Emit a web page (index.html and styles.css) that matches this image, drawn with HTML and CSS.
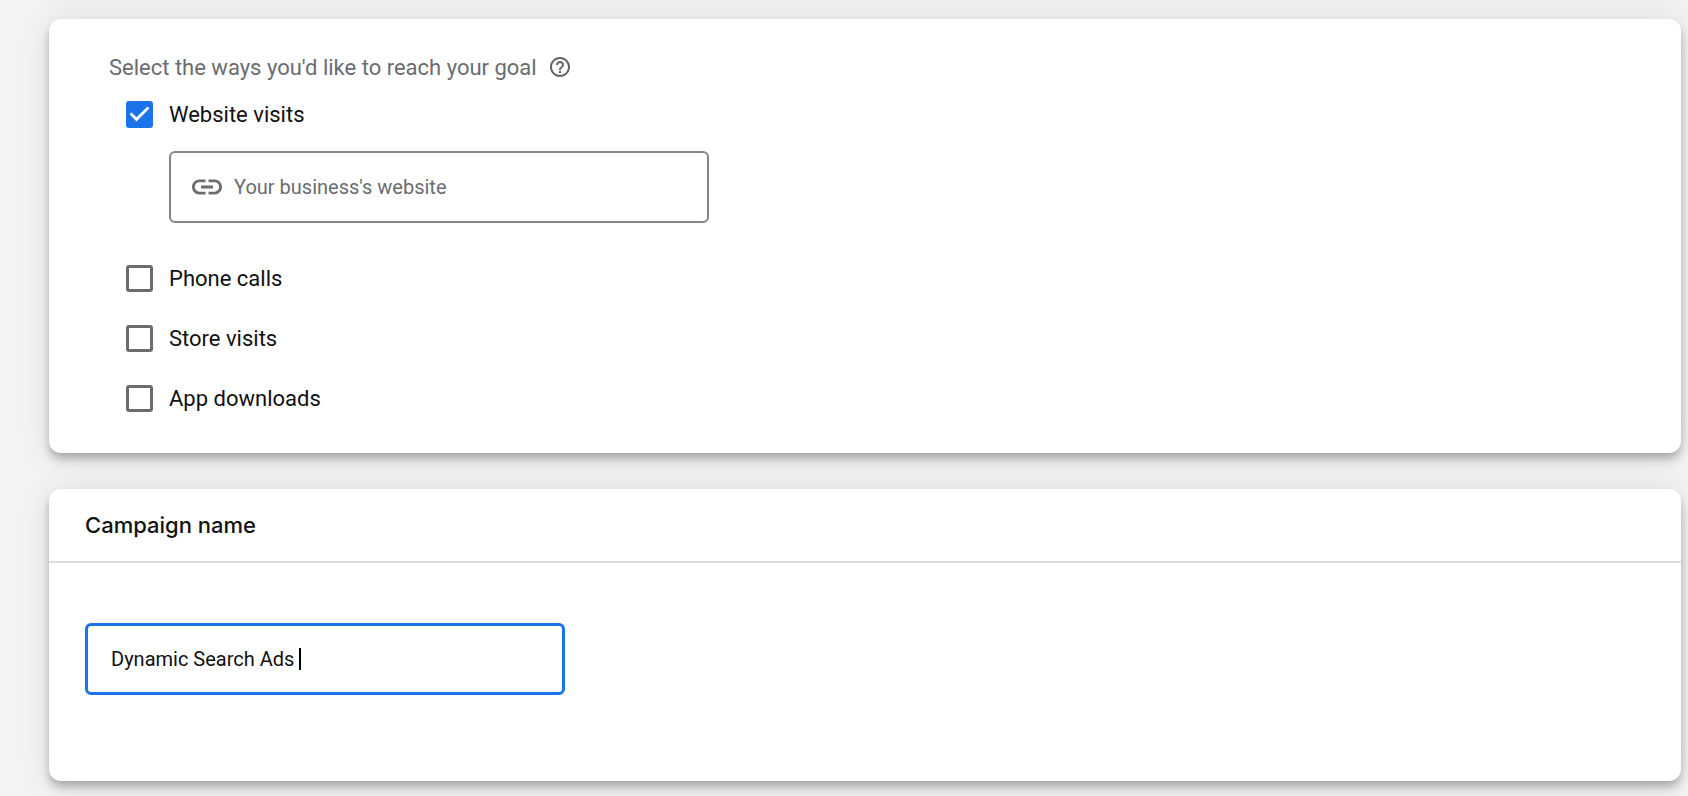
FILE: index.html
```
<!DOCTYPE html>
<html lang="en">
<head>
    <meta charset="UTF-8">
    <meta name="viewport" content="width=device-width, initial-scale=1.0">
    <title>New campaign</title>
    <link rel="stylesheet" href="styles.css">
</head>
<body>
    <main class="page">
        <section class="card previous-card"></section>

        <section class="card goal-card">
            <fieldset class="goals">
                <legend class="goals-title">
                    Select the ways you'd like to reach your goal
                    <button class="help" type="button" aria-label="Help">
                        <svg viewBox="0 0 24 24" width="24" height="24" fill="currentColor">
                            <path d="M11 18h2v-2h-2v2zm1-16C6.48 2 2 6.48 2 12s4.48 10 10 10 10-4.48 10-10S17.52 2 12 2zm0 18c-4.41 0-8-3.59-8-8s3.59-8 8-8 8 3.59 8 8-3.59 8-8 8zm0-14c-2.21 0-4 1.79-4 4h2c0-1.1.9-2 2-2s2 .9 2 2c0 2-3 1.75-3 5h2c0-2.25 3-2.5 3-5 0-2.21-1.79-4-4-4z"/>
                        </svg>
                    </button>
                </legend>
                <label class="option"><input type="checkbox" checked> Website visits</label>
                <div class="website-field">
                    <svg viewBox="0 0 24 24" width="36" height="36" fill="currentColor">
                        <path d="M3.9 12c0-1.71 1.39-3.1 3.1-3.1h4V7H7c-2.76 0-5 2.24-5 5s2.24 5 5 5h4v-1.9H7c-1.71 0-3.1-1.39-3.1-3.1zM8 13h8v-2H8v2zm9-6h-4v1.9h4c1.71 0 3.1 1.39 3.1 3.1s-1.39 3.1-3.1 3.1h-4V17h4c2.76 0 5-2.24 5-5s-2.24-5-5-5z"/>
                    </svg>
                    <input type="text" placeholder="Your business's website" aria-label="Your business's website">
                </div>
                <label class="option"><input type="checkbox"> Phone calls</label>
                <label class="option"><input type="checkbox"> Store visits</label>
                <label class="option"><input type="checkbox"> App downloads</label>
            </fieldset>
        </section>

        <section class="card name-card">
            <h2><label for="campaign-name">Campaign name</label></h2>
            <div class="name-body">
                <div class="name-field">
                    <input id="campaign-name" type="text" value="Dynamic Search Ads ">
                    <span class="caret"></span>
                </div>
            </div>
        </section>
    </main>
</body>
</html>
```
FILE: styles.css
```
* {
    box-sizing: border-box;
}
body {
    margin: 0;
    background-color: #f1f3f4;
    color: #111;
    font-family: Roboto, Arial, sans-serif;
    font-size: 22px;
    overflow: hidden;
}
input, button {
    font-family: inherit;
    margin: 0;
}
.page {
    display: flex;
    flex-direction: column;
    gap: 36px;
    padding: 0 7px 15px 49px;
}
.card {
    background-color: white;
    border-radius: 12px;
    box-shadow: 0 8px 10px rgba(0, 0, 0, 0.14), 0 2px 32px rgba(0, 0, 0, 0.1), 0 4px 8px -2px rgba(0, 0, 0, 0.2);
}
/* bottom edge of the card above, scrolled out of view */
.previous-card {
    height: 60px;
    margin-top: -77px;
}
.goal-card {
    padding: 32px 60px 25px;
}
.goals {
    border: 0;
    margin: 0;
    padding: 0;
}
.goals-title {
    display: flex;
    align-items: center;
    gap: 11px;
    height: 32px;
    margin-bottom: 1px;
    padding: 0;
    color: #6a6c70;
}
.help {
    display: flex;
    padding: 0;
    border: 0;
    background: none;
    color: #5f6368;
}
.option {
    display: flex;
    align-items: center;
    gap: 16px;
    height: 60px;
    padding-left: 17px;
}
.option input {
    appearance: none;
    display: grid;
    place-items: center;
    width: 27px;
    height: 27px;
    border: 3px solid #6b6c6e;
    border-radius: 3px;
}
.option input:checked {
    border-color: #1a73e8;
    background-color: #1a73e8;
}
.option input:checked::before {
    content: "";
    width: 20px;
    height: 15px;
    background-color: white;
    clip-path: polygon(0 52%, 10% 40%, 35% 72%, 90% 0, 100% 12%, 35% 100%);
}
.website-field {
    display: flex;
    align-items: center;
    gap: 9px;
    max-width: 540px;
    height: 72px;
    margin: 7px 0 25px 60px;
    padding: 0 18px;
    border: 2px solid #80868b;
    border-radius: 6px;
    color: #6a6c70;
}
.website-field input {
    flex: 1;
    border: 0;
    padding: 0;
    outline: 0;
    font-size: 20px;
}
.website-field input::placeholder {
    color: #6a6c70;
}
.name-card h2 {
    margin: 0;
    padding: 0 36px;
    border-bottom: 2px solid #dadce0;
    font-family: Inter, sans-serif;
    font-size: 22px;
    font-weight: 500;
    line-height: 72px;
}
.name-body {
    padding: 60px 36px 86px;
}
.name-field {
    display: flex;
    align-items: center;
    max-width: 480px;
    height: 72px;
    padding: 0 23px;
    border: 3px solid #1a73e8;
    border-radius: 6px;
}
.name-field input {
    field-sizing: content;
    border: 0;
    padding: 0;
    outline: 0;
    color: #111;
    font-size: 20px;
}
.caret {
    width: 2px;
    height: 22px;
    background-color: #000;
}
```
